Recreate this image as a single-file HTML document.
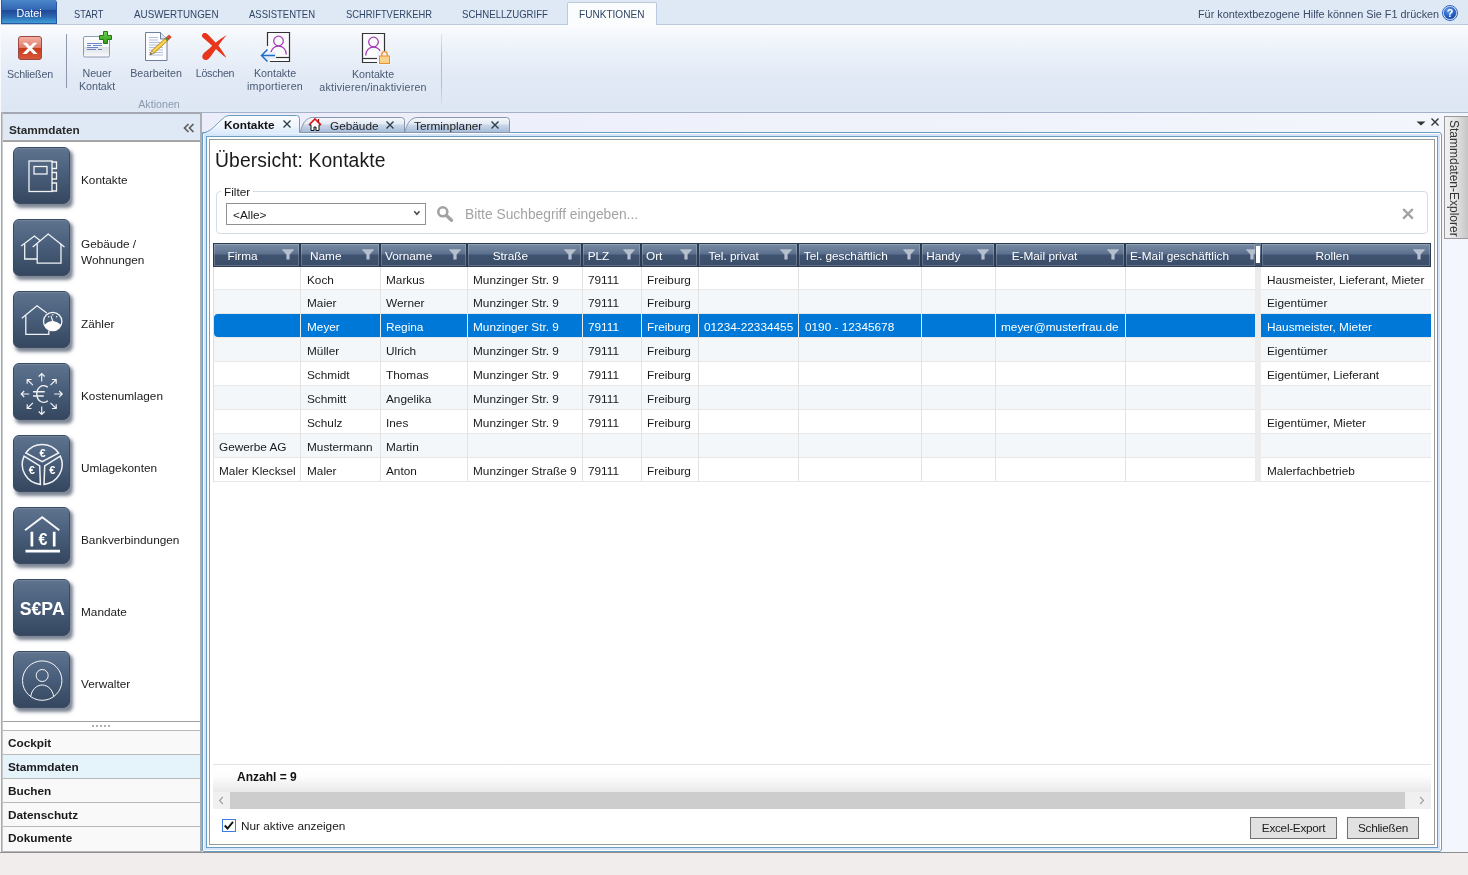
<!DOCTYPE html>
<html lang="de">
<head>
<meta charset="utf-8">
<title>Übersicht: Kontakte</title>
<style>
*{box-sizing:border-box;margin:0;padding:0}
html,body{width:1468px;height:875px;overflow:hidden}
body{will-change:transform;position:relative;background:#f3f6fc;font-family:"Liberation Sans",sans-serif;font-size:11.8px;color:#1a1a1a}
.abs{position:absolute}
.t{position:absolute;white-space:nowrap;line-height:1}
/* ribbon tab strip */
#rtabs{position:absolute;left:0;top:0;width:1468px;height:25px;background:#dfe9f5;border-bottom:1px solid #b9c9de}
#rtabs .rt{position:absolute;top:9px;font-size:10.6px;color:#2f4566;white-space:nowrap;line-height:1;transform-origin:left center;transform:scaleX(.92)}
#datei{position:absolute;left:1px;top:0;width:56px;height:24px;border:1px solid #2a57a5;border-top:none;border-radius:0 3px 0 0;
 background:linear-gradient(#4a86c8 0,#3366b4 42%,#1f4797 46%,#2a64b0 70%,#3fa0d6 100%);color:#fff;font-size:10.800px;text-align:center;line-height:26px}
#funk{position:absolute;left:567px;top:2px;width:90px;height:24px;background:#fbfcfe;border:1px solid #b9c9de;border-bottom:none;border-radius:2px 2px 0 0}
/* ribbon body */
#ribbon{position:absolute;left:0;top:25px;width:1468px;height:86px;background:linear-gradient(#fafcfe 0,#eef3fa 25%,#e2eaf6 60%,#dde6f3 100%);border-bottom:1px solid #d3deed}
#ribbon .lb{position:absolute;font-size:10.7px;color:#4a5a74;white-space:nowrap;text-align:center;line-height:13px}
#belowrib{position:absolute;left:0;top:110px;width:1468px;height:3px;background:linear-gradient(#dfe8f4 0,#dfe8f4 50%,#a6b2ca 67%,#a6b2ca 100%)}
/* left panel */
#left{position:absolute;left:2px;top:112px;width:200px;height:740px;background:#fff;border:1px solid #a8a8a8;border-left-color:#c9c9c9;border-right:2px solid #adadb2;border-bottom:2px solid #b8b8b8;border-top:2px solid #a3a8b2}
#lhead{position:absolute;left:0;top:0;width:197px;height:27px;background:#dfe9f5;border-bottom:1px solid #a9a9a9}
#lbody{position:absolute;left:0;top:27px;width:197px;height:581px;background:#fff;border:1px solid #a0a0a0;border-left:none;border-right:none}
.ic{position:absolute;left:10px;width:57px;height:57px;border-radius:6px;background:linear-gradient(#5e738e 0,#4a5f7b 45%,#35475f 100%);box-shadow:2.500px 3.500px 3.500px rgba(45,58,82,.62),inset 0 1px 0 rgba(255,255,255,.12);border:1px solid #3a4b63}
.ic svg{position:absolute;left:0;top:0}
.il{position:absolute;left:78px;font-size:11.8px;color:#1a1a1a;line-height:16px;white-space:nowrap}
.nav{position:absolute;left:0;width:197px;height:24px;border-top:1px solid #b8b8b8;background:#f9f9f9;font-weight:bold;font-size:11.8px;line-height:24px;padding-left:5px;color:#1a1a1a}
/* status */
#status{position:absolute;left:0;top:852px;width:1468px;height:23px;background:#f0edec;border-top:1px solid #8e8e8e}
/* doc tabs */
.dtab{position:absolute;top:116px;height:18px}
/* frame */
#f1{position:absolute;left:202px;top:132px;width:1240px;height:720px;border:1px solid #6b9dc2;background:#d5e6fb;box-shadow:inset 0 0 0 1px #fff;border-radius:0 3px 3px 2px}
#f2{position:absolute;left:206px;top:136px;width:1232px;height:712px;border:1px solid #6b9dc2;background:#fff}
#f3{position:absolute;left:209px;top:139px;width:1226px;height:706px;border:1px solid #999;background:#fff}
/* grid */
.hc{position:absolute;top:243px;height:24px;background:linear-gradient(#788aa2 0,#6a7d98 25%,#5a6f8d 46%,#3f5371 50%,#3a4d68 100%);border:1px solid #2b3b52;box-shadow:inset 0 0 0 1px rgba(255,255,255,.2);color:#fff;font-size:11.8px;line-height:22px;white-space:nowrap;overflow:hidden}
.hc span{position:absolute;top:1px}
.hc svg{position:absolute;top:4.800px;right:5.300px}
.row{position:absolute;left:214px;width:1217px;height:24px}
.row.alt{background:#f3f7f9}
.row.sel{background:#0078d7;color:#fff;border-radius:4px 0 0 4px}
.row span{position:absolute;top:8px;white-space:nowrap;line-height:1;font-size:11.8px}
.vl{position:absolute;top:267px;width:1px;height:215px;background:#e3e3e3}
.hl{position:absolute;left:213px;width:1218px;height:1px;background:#e8e8e8}
.btn{position:absolute;top:817px;height:22px;border:1px solid #707070;background:#e1e1e1;font-size:11.8px;line-height:20px;text-align:center;color:#1a1a1a}
</style>
</head>
<body>
<div id="rtabs">
 <div id="datei">Datei</div>
 <div id="funk"></div>
 <span class="rt" style="left:74px;transform:scaleX(0.873)">START</span>
 <span class="rt" style="left:134px;transform:scaleX(0.928)">AUSWERTUNGEN</span>
 <span class="rt" style="left:249px;transform:scaleX(0.897)">ASSISTENTEN</span>
 <span class="rt" style="left:346px;transform:scaleX(0.885)">SCHRIFTVERKEHR</span>
 <span class="rt" style="left:462px;transform:scaleX(0.907)">SCHNELLZUGRIFF</span>
 <span class="rt" style="left:579px;transform:scaleX(0.95)">FUNKTIONEN</span>
 <span class="t" style="left:1198px;top:9px;font-size:10.85px;color:#3a4a66">Für kontextbezogene Hilfe können Sie F1 drücken</span>
<svg class="abs" style="left:1441px;top:4px" width="18" height="18" viewBox="0 0 18 18"><defs><radialGradient id="hg" cx=".4" cy=".3" r=".85"><stop offset="0" stop-color="#6aa6ec"/><stop offset=".5" stop-color="#2c68c8"/><stop offset="1" stop-color="#0a2f8a"/></radialGradient></defs><circle cx="9" cy="9" r="7.500" fill="#eaf1fc" stroke="#2d64c4" stroke-width="1"/><circle cx="9" cy="9" r="6" fill="url(#hg)" stroke="#2a5fc0" stroke-width=".6"/><text x="9" y="12.900" font-family="Liberation Sans, sans-serif" font-weight="bold" font-size="10.800" fill="#fff" text-anchor="middle">?</text></svg>
</div>
<div id="ribbon">
 <!-- Schliessen -->
 <svg class="abs" style="left:16px;top:9px" width="28" height="30" viewBox="0 0 28 30">
  <defs><linearGradient id="rg" x1="0" y1="0" x2="0" y2="1"><stop offset="0" stop-color="#f4b3a6"/><stop offset=".48" stop-color="#e07a68"/><stop offset=".52" stop-color="#c93a1c"/><stop offset="1" stop-color="#d9583a"/></linearGradient></defs>
  <rect x="2.5" y="2.5" width="23" height="23" rx="2.5" fill="url(#rg)" stroke="#9a4a3e" stroke-width="1"/>
  <path d="M6.600 8.700H10.700L14 12.200L17.300 8.700H21.400L16.100 14.300L21.600 20.100H17.400L14 16.500L10.600 20.100H6.400L11.900 14.300Z" fill="#fff"/>
 </svg>
 <span class="lb" style="left:7px;top:43px;width:46px;letter-spacing:-.18px">Schließen</span>
 <div class="abs" style="left:66px;top:9px;width:1px;height:54px;background:#8d98ab"></div>
 <!-- Neuer Kontakt -->
 <svg class="abs" style="left:80px;top:4px" width="36" height="34" viewBox="0 0 36 34">
  <defs><linearGradient id="cg" x1="0" y1="0" x2="0" y2="1"><stop offset="0" stop-color="#fdfdfe"/><stop offset=".5" stop-color="#f6f7fa"/><stop offset=".52" stop-color="#dfe0e5"/><stop offset=".8" stop-color="#eceef2"/><stop offset="1" stop-color="#fafbfd"/></linearGradient>
  <linearGradient id="gg" x1="0" y1="0" x2="0" y2="1"><stop offset="0" stop-color="#6fd04f"/><stop offset="1" stop-color="#2f9a1c"/></linearGradient></defs>
  <rect x="3.5" y="7.500" width="26" height="20.500" rx="1.500" fill="url(#cg)" stroke="#8e9bb3" stroke-width="1"/>
  <path d="M7 14.500h15M7 16.500h4M13 16.500h9M7 18.500h11M7 20.500h9M18 20.500h4" stroke="#5a78c0" stroke-width=".9" fill="none"/>
  <path d="M23.500 2.500h4v4h4v4h-4v4h-4v-4h-4v-4h4z" fill="url(#gg)" stroke="#1f7a12" stroke-width="1"/>
 </svg>
 <span class="lb" style="left:74px;top:42px;width:46px">Neuer<br>Kontakt</span>
 <!-- Bearbeiten -->
 <svg class="abs" style="left:143px;top:5px" width="32" height="34" viewBox="0 0 32 34">
  <path d="M2.5 2.5h15l6.5 6.5v21.5h-21.5z" fill="#fbfcfe" stroke="#6f7f9c" stroke-width="1"/>
  <path d="M17.5 2.5v6.5h6.500" fill="#dfe6f2" stroke="#6f7f9c" stroke-width="1"/>
  <path d="M6 7.500h9M6 10h9M6 12.500h14M6 15h14M6 17.500h14M6 20h14M6 22.500h14M6 25h14" stroke="#a9b7d6" stroke-width=".9"/>
  <path d="M7 24.600L8.800 20.600L22.100 8.500L24.400 11L11.100 23.150Z" fill="#f5c533" stroke="#a87f14" stroke-width=".7" stroke-linejoin="round"/>
  <path d="M9.900 21.800L23.200 9.700" stroke="#fbe38a" stroke-width=".9"/>
  <path d="M7 24.600L8.800 20.600L11.100 23.150Z" fill="#f2d6ad" stroke="#8a7350" stroke-width=".5"/>
  <path d="M7 24.600L7.800 22.900L9 24.100Z" fill="#2a2a2a"/>
  <path d="M22.100 8.500L23.350 7.320L25.650 9.840L24.400 11Z" fill="#3f9a58" stroke="#2c6e3e" stroke-width=".4"/>
  <path d="M23.350 7.320L25 5.700C25.600 5.100 26.500 5.100 27.100 5.700L27.600 6.200C28.200 6.900 28.200 7.600 27.500 8.200L25.650 9.840Z" fill="#e4472c" stroke="#a8301c" stroke-width=".4"/>
 </svg>
 <span class="lb" style="left:126px;top:42px;width:60px">Bearbeiten</span>
 <!-- Loeschen -->
 <svg class="abs" style="left:199px;top:5px" width="32" height="34" viewBox="0 0 32 34">
  <path d="M3.200 6.800C2.200 4.600 4.200 2.400 6.600 3C8.200 3.500 9.200 4.600 10.200 5.800L18.400 14.600C21.600 18.500 25 23.500 27.500 27.900C23.500 25.200 19 20.800 15.500 17.700L5.200 8.800C4.300 8.200 3.600 7.600 3.200 6.800Z" fill="#e8361c"/>
  <path d="M27.900 5C24.500 8.600 21.200 13 18.800 16.400C15.600 20.700 12.600 25.600 9.700 28.700C7.800 30.700 4.600 30.500 3.500 28.100C2.700 26 3.900 24 5.500 22.600C8.500 20 11.500 17.300 14.600 14.400C18.500 10.900 23.500 7.400 27.900 5Z" fill="#e8361c"/>
 </svg>
 <span class="lb" style="left:190px;top:42px;width:50px;letter-spacing:-.28px">Löschen</span>
 <!-- Kontakte importieren -->
 <svg class="abs" style="left:258px;top:4px" width="36" height="36" viewBox="0 0 36 36">
  <path d="M12 3.500h19.500v29h-17" fill="#fdfdfe" stroke="none"/>
  <path d="M9.500 17V3.500h22v29H12" fill="#fbfbfd" stroke="#333" stroke-width="1.200"/>
  <path d="M31.500 28.500H14" stroke="#333" stroke-width="1.200" fill="none"/>
  <circle cx="20.500" cy="12" r="4.800" fill="none" stroke="#a43fb5" stroke-width="1.300"/>
  <path d="M12.700 25.500c0-5 3.500-8.500 7.800-8.500s7.800 3.500 7.800 8.500" fill="none" stroke="#a43fb5" stroke-width="1.300"/>
  <rect x="9" y="23" width="9" height="7" fill="#e8eef8"/>
  <path d="M3.500 26.500H17M9.500 20.500l-6 6 6 6" fill="none" stroke="#1e6fc8" stroke-width="1.500"/>
 </svg>
 <span class="lb" style="left:240px;top:42px;width:70px">Kontakte<br><span style="letter-spacing:.23px">importieren</span></span>
 <!-- Kontakte aktivieren -->
 <svg class="abs" style="left:358px;top:4px" width="36" height="38" viewBox="0 0 36 38">
  <path d="M4.500 4.500h22v29h-22z" fill="#fbfbfd" stroke="#333" stroke-width="1.200"/>
  <path d="M4.500 29.500h22" stroke="#333" stroke-width="1.200"/>
  <circle cx="15.500" cy="13" r="4.800" fill="none" stroke="#a43fb5" stroke-width="1.300"/>
  <path d="M7.700 26.500c0-5 3.500-8.500 7.800-8.500s7.800 3.500 7.800 8.500" fill="none" stroke="#a43fb5" stroke-width="1.300"/>
  <rect x="19" y="22" width="14" height="14" fill="#eef2fa"/>
  <path d="M23.800 27v-1.600a2.700 2.700 0 0 1 5.400 0V27" fill="none" stroke="#f0902c" stroke-width="1.300"/>
  <rect x="21.500" y="27" width="10" height="7.500" fill="#f9d38a" stroke="#f0902c" stroke-width="1"/>
 </svg>
 <span class="lb" style="left:313px;top:43px;width:120px">Kontakte<br><span style="letter-spacing:.2px">aktivieren/inaktivieren</span></span>
 <span class="lb" style="left:129px;top:73px;width:60px;color:#8c99af">Aktionen</span>
 <div class="abs" style="left:441px;top:9px;width:1px;height:74px;background:linear-gradient(#dfe6f0,#b4c0d2 30%,#b4c0d2 70%,#dfe6f0)"></div>
</div>
<div id="belowrib"></div>
<div id="left">
 <div id="lhead"><span class="t" style="left:6px;top:11px;font-weight:bold;font-size:11.800px;color:#2a2a2a">Stammdaten</span>
  <svg class="abs" style="left:180px;top:9px" width="12" height="10" viewBox="0 0 12 10"><path d="M5.500 1L1.500 5l4 4M10.500 1L6.500 5l4 4" fill="none" stroke="#5e5e5e" stroke-width="1.700"/></svg></div>
 <div id="lbody">
<div class="ic" style="top:5px"><svg width="57" height="57" viewBox="0 0 57 57"><g stroke="#fff" stroke-width="1.3" fill="none" stroke-linejoin="miter" stroke-opacity=".92"><rect x="15" y="13" width="23" height="30.500"/><rect x="20" y="18.500" width="13" height="7.500"/><path d="M38 14h4.500v6.500h-4.500M38 24.500h4.500v6.500h-4.500M38 35h4.500v8h-4.500"/></g></svg></div>
<div class="il" style="top:30px">Kontakte</div>
<div class="ic" style="top:77px"><svg width="57" height="57" viewBox="0 0 57 57"><g stroke="#fff" stroke-width="1.3" fill="none" stroke-linejoin="miter" stroke-opacity=".92"><path d="M7.200 26L20.400 16L26 20.500"/><path d="M10.700 24V39H23"/><path d="M18.700 27L34.200 14L50.500 27"/><path d="M23.200 23.700V43.200H47V23.700"/></g></svg></div>
<div class="il" style="top:94px">Gebäude /<br>Wohnungen</div>
<div class="ic" style="top:149px"><svg width="57" height="57" viewBox="0 0 57 57"><g stroke="#fff" stroke-width="1.3" fill="none" stroke-linejoin="miter" stroke-opacity=".92"><path d="M7.800 26.300L23 13.800L32.800 21"/><path d="M11.800 23.500V42.300H34.800V38.800"/><circle cx="38.700" cy="29.500" r="9.200"/></g><path d="M30.400 32.800Q34 29.300 38 29L36.500 23.800L37.300 23.600L39.300 29Q43.500 29.400 47 32.800A8.700 8.700 0 0 1 30.400 32.800Z" fill="#fff"/><circle cx="34.700" cy="24.800" r=".7" fill="#fff"/><circle cx="38.700" cy="22.800" r=".7" fill="#fff"/><circle cx="42.700" cy="24.800" r=".7" fill="#fff"/></svg></div>
<div class="il" style="top:174px">Zähler</div>
<div class="ic" style="top:221px"><svg width="57" height="57" viewBox="0 0 57 57"><g stroke="#fff" stroke-width="1.150" fill="none" stroke-opacity=".92"><path d="M40.2 30.0L48.2 30.0M45.2 33.0L48.2 30.0L45.2 27.0M36.5 38.8L42.2 44.5M37.9 44.5L42.2 44.5L42.2 40.2M27.7 42.5L27.7 50.5M24.7 47.5L27.7 50.5L30.7 47.5M18.9 38.8L13.2 44.5M13.2 40.2L13.2 44.5L17.5 44.5M15.2 30.0L7.2 30.0M10.2 27.0L7.2 30.0L10.2 33.0M18.9 21.2L13.2 15.5M17.5 15.5L13.2 15.5L13.2 19.8M27.7 17.5L27.7 9.5M30.7 12.5L27.7 9.5L24.7 12.5M36.5 21.2L42.2 15.5M42.2 19.8L42.2 15.5L37.9 15.5"/><path d="M33.800 23.200C31.800 21.500 28.300 21 25.800 23C21.800 26 21.800 34 25.800 37C28.300 39 31.800 38.500 33.800 36.800M19 27.800H30.800M19 32H29.800" stroke-width="1.400"/></g></svg></div>
<div class="il" style="top:246px">Kostenumlagen</div>
<div class="ic" style="top:293px"><svg width="57" height="57" viewBox="0 0 57 57"><path d="M28.2 25.6L11.8 17.0A20 20 0 0 1 44.6 17.0ZM30.7 29.9L46.3 20.1A20 20 0 0 1 30.0 48.4ZM25.7 29.9L26.4 48.4A20 20 0 0 1 10.1 20.1Z" stroke="#fff" stroke-width="1.500" fill="none" stroke-opacity=".92"/><text x="28.600" y="21" font-size="11" font-family="Liberation Sans, sans-serif" font-weight="bold" fill="#fff" text-anchor="middle">€</text><text x="17.900" y="38.300" font-size="11" font-family="Liberation Sans, sans-serif" font-weight="bold" fill="#fff" text-anchor="middle">€</text><text x="38.300" y="38.300" font-size="11" font-family="Liberation Sans, sans-serif" font-weight="bold" fill="#fff" text-anchor="middle">€</text></svg></div>
<div class="il" style="top:318px">Umlagekonten</div>
<div class="ic" style="top:365px"><svg width="57" height="57" viewBox="0 0 57 57"><path d="M11 22.300L28.200 9.300L45.300 22.300" stroke="#fff" stroke-width="1.900" fill="none" stroke-opacity=".95"/><path d="M17.900 23.800V38.500M40.200 23.800V38.500M11.500 43.200H46" stroke="#fff" stroke-width="2.700" fill="none"/><text x="29" y="36.800" font-size="16" font-family="Liberation Sans, sans-serif" font-weight="bold" fill="#fff" text-anchor="middle">€</text></svg></div>
<div class="il" style="top:390px">Bankverbindungen</div>
<div class="ic" style="top:437px"><svg width="57" height="57" viewBox="0 0 57 57"><text x="28.200" y="35.200" font-size="17.500" font-family="Liberation Sans, sans-serif" font-weight="bold" fill="#fff" text-anchor="middle" textLength="45" lengthAdjust="spacingAndGlyphs">S€PA</text></svg></div>
<div class="il" style="top:462px">Mandate</div>
<div class="ic" style="top:509px"><svg width="57" height="57" viewBox="0 0 57 57"><g stroke="#fff" stroke-width="1" fill="none" stroke-opacity=".95"><circle cx="28.200" cy="28.600" r="19.700"/><circle cx="28.200" cy="23.500" r="6"/><path d="M16.800 44.500C17.500 38 22.500 33 28.200 33C33.900 33 38.900 38 39.600 44.500"/></g></svg></div>
<div class="il" style="top:534px">Verwalter</div>
 </div>
 <div class="abs" style="left:89px;top:611px;width:18px;height:2px;background:repeating-linear-gradient(90deg,#b0b0b0 0 2px,transparent 2px 4px)"></div>
<div class="nav" style="top:616px">Cockpit</div>
<div class="nav" style="top:640px;background:#e5f3fb">Stammdaten</div>
<div class="nav" style="top:664px">Buchen</div>
<div class="nav" style="top:688px">Datenschutz</div>
<div class="nav" style="top:712px;line-height:22px;height:25px">Dokumente</div>
</div>
<div id="status"></div>
<div class="abs" style="left:1px;top:112px;width:1px;height:740px;background:#a9a9a9"></div>
<div class="abs" style="left:0;top:0;width:1px;height:852px;background:#f8fafd"></div>
<div class="abs" style="left:202px;top:113px;width:1240px;height:20px;background:linear-gradient(90deg,#ecedfa 0,#eff1fb 50%,#f3f6fc 100%)"></div>
<svg class="abs" style="left:203px;top:113px;z-index:3;overflow:visible" width="320" height="22" viewBox="0 0 320 22">
 <defs>
  <linearGradient id="tg" x1="0" y1="0" x2="0" y2="1"><stop offset="0" stop-color="#f7f9fc"/><stop offset=".42" stop-color="#e3eaf4"/><stop offset=".5" stop-color="#cad7e9"/><stop offset="1" stop-color="#a4bbd9"/></linearGradient>
  <linearGradient id="ta" x1="0" y1="0" x2="0" y2="1"><stop offset="0" stop-color="#fcfdff"/><stop offset=".5" stop-color="#eef5fd"/><stop offset="1" stop-color="#d5e6fb"/></linearGradient>
 </defs>
 <path d="M201.500 19.500C203.500 14 204.500 8.500 210 5.500C212 4.600 214 4.500 216 4.500H303.500Q306.500 4.500 306.500 7.500V19.500Z" fill="url(#tg)" stroke="#8796ad" stroke-width="1"/>
 <path d="M97 19.500C99 14 100 8.500 105.500 5.500C107 4.600 109 4.500 111 4.500H198.500Q201.500 4.500 201.500 7.500V19.500Z" fill="url(#tg)" stroke="#8796ad" stroke-width="1"/>
 <path d="M0.500 23V21Q0.500 20.300 2 20C10 17 14 10 20 5.500C22 3.600 24 2.500 27 2.500H93.500Q96.500 2.500 96.500 5.500V20.500L0.500 21Z" fill="url(#ta)"/>
 <path d="M-0.500 23V21.500Q-0.500 19.700 2 19.500C10 17 14 10 20 5.500C22 3.600 24 2.500 27 2.500H93.500Q96.500 2.500 96.500 5.500V19.500" fill="none" stroke="#6b9dc2" stroke-width="1"/>
 <g stroke="#2a3f4a" stroke-width="1.400" fill="none"><path d="M80.500 7.500l7 7M87.500 7.500l-7 7"/><path d="M183.500 8.500l7 7M190.500 8.500l-7 7"/><path d="M288.500 8.500l7 7M295.500 8.500l-7 7"/></g>
 <g><path d="M112 6l-5.800 5.800h1.800v5.700h3v-3.500h2v3.500h3v-5.700h1.800z" fill="#fff" stroke="#111" stroke-width="1"/><path d="M106 12L112 6l6 6" fill="none" stroke="#e01010" stroke-width="1.600"/><path d="M115.500 6v3" stroke="#a01010" stroke-width="1.200"/></g>
</svg>
<span class="t" style="z-index:4;left:224px;top:119.500px;font-weight:bold;font-size:11.800px;color:#111">Kontakte</span>
<span class="t" style="z-index:4;left:330px;top:120.500px;font-size:11.800px;color:#222">Gebäude</span>
<span class="t" style="z-index:4;left:414px;top:120.500px;font-size:11.800px;color:#222">Terminplaner</span>
<svg class="abs" style="left:1415px;top:117px" width="28" height="12" viewBox="0 0 28 12"><path d="M1.500 4.500h9l-4.500 4z" fill="#333"/><path d="M16.500 1.500l7 7M23.500 1.500l-7 7" stroke="#333" stroke-width="1.400" fill="none"/></svg>
<div class="abs" style="left:1444px;top:116px;width:25px;height:123px;border:1px solid #9a9a9a;background:linear-gradient(90deg,#f2f2f2 0,#e4e4e4 45%,#c6c6c6 100%)"></div>
<span class="t" style="left:1460px;top:119.500px;font-size:12px;color:#333;transform:rotate(90deg);transform-origin:left top">Stammdaten-Explorer</span>
<div id="f1"></div><div id="f2"></div><div id="f3"></div>
<span class="t" style="left:215px;top:151px;font-size:19.300px;color:#1a1a1a;letter-spacing:.12px">Übersicht: Kontakte</span>
<div class="abs" style="left:216px;top:191px;width:1212px;height:43px;border:1px solid #d3dde5;border-radius:4px"></div>
<span class="t" style="left:221px;top:187px;font-size:11.800px;background:#fff;padding:0 3px">Filter</span>
<div class="abs" style="left:226px;top:203px;width:200px;height:22px;border:1px solid #919191;background:#fff"></div>
<span class="t" style="left:233px;top:210px;font-size:11.800px">&lt;Alle&gt;</span>
<svg class="abs" style="left:412.500px;top:210px" width="8" height="6" viewBox="0 0 8 6"><path d="M1.300 1.200l2.600 3.100 2.600-3.100" fill="none" stroke="#484848" stroke-width="1.500"/></svg>
<svg class="abs" style="left:436px;top:205px" width="18" height="18" viewBox="0 0 18 18"><circle cx="6.800" cy="6.800" r="4.500" fill="none" stroke="#a2a2a2" stroke-width="2.600"/><path d="M10.500 10.500L15.500 15.300" stroke="#a2a2a2" stroke-width="3.300" stroke-linecap="round"/></svg>
<span class="t" style="left:465px;top:208px;font-size:13.800px;color:#a3a3a3">Bitte Suchbegriff eingeben...</span>
<svg class="abs" style="left:1400px;top:206px" width="16" height="16" viewBox="0 0 16 16"><path d="M3.200 3l9.600 9.600M12.800 3L3.200 12.600" stroke="#a2a2a2" stroke-width="2.400" fill="none"/></svg>
<div class="abs" style="left:213px;top:243px;width:1218px;height:24px;background:#2c3b50"></div>
<div class="hc" style="left:213px;width:87px"><span style="left:13.5px">Firma</span><svg width="12" height="11" viewBox="0 0 12 11"><path d="M.2.300h11.600v.700L7.600 5.600V10.600H4.400V5.600L.2 1z" fill="#b6bfcd"/></svg></div>
<div class="hc" style="left:300px;width:80px"><span style="left:9.0px">Name</span><svg width="12" height="11" viewBox="0 0 12 11"><path d="M.2.300h11.600v.700L7.600 5.600V10.600H4.400V5.600L.2 1z" fill="#b6bfcd"/></svg></div>
<div class="hc" style="left:380px;width:87px"><span style="left:4.0px">Vorname</span><svg width="12" height="11" viewBox="0 0 12 11"><path d="M.2.300h11.600v.700L7.600 5.600V10.600H4.400V5.600L.2 1z" fill="#b6bfcd"/></svg></div>
<div class="hc" style="left:467px;width:115px"><span style="left:24.7px">Straße</span><svg width="12" height="11" viewBox="0 0 12 11"><path d="M.2.300h11.600v.700L7.600 5.600V10.600H4.400V5.600L.2 1z" fill="#b6bfcd"/></svg></div>
<div class="hc" style="left:582px;width:59px"><span style="left:4.7px">PLZ</span><svg width="12" height="11" viewBox="0 0 12 11"><path d="M.2.300h11.600v.700L7.600 5.600V10.600H4.400V5.600L.2 1z" fill="#b6bfcd"/></svg></div>
<div class="hc" style="left:641px;width:57px"><span style="left:4.0px">Ort</span><svg width="12" height="11" viewBox="0 0 12 11"><path d="M.2.300h11.600v.700L7.600 5.600V10.600H4.400V5.600L.2 1z" fill="#b6bfcd"/></svg></div>
<div class="hc" style="left:698px;width:100px"><span style="left:9.4px">Tel. privat</span><svg width="12" height="11" viewBox="0 0 12 11"><path d="M.2.300h11.600v.700L7.600 5.600V10.600H4.400V5.600L.2 1z" fill="#b6bfcd"/></svg></div>
<div class="hc" style="left:798px;width:123px"><span style="left:4.8px">Tel. geschäftlich</span><svg width="12" height="11" viewBox="0 0 12 11"><path d="M.2.300h11.600v.700L7.600 5.600V10.600H4.400V5.600L.2 1z" fill="#b6bfcd"/></svg></div>
<div class="hc" style="left:921px;width:74px"><span style="left:4.2px">Handy</span><svg width="12" height="11" viewBox="0 0 12 11"><path d="M.2.300h11.600v.700L7.600 5.600V10.600H4.400V5.600L.2 1z" fill="#b6bfcd"/></svg></div>
<div class="hc" style="left:995px;width:130px"><span style="left:15.7px">E-Mail privat</span><svg width="12" height="11" viewBox="0 0 12 11"><path d="M.2.300h11.600v.700L7.600 5.600V10.600H4.400V5.600L.2 1z" fill="#b6bfcd"/></svg></div>
<div class="hc" style="left:1125px;width:130px;border-right:none"><span style="left:4.0px">E-Mail geschäftlich</span><svg style="right:-2.800px" width="12" height="11" viewBox="0 0 12 11"><path d="M.2.300h11.600v.700L7.600 5.600V10.600H4.400V5.600L.2 1z" fill="#b6bfcd"/></svg></div>
<div class="hc" style="left:1261px;width:170px"><span style="left:53.5px">Rollen</span><svg width="12" height="11" viewBox="0 0 12 11"><path d="M.2.300h11.600v.700L7.600 5.600V10.600H4.400V5.600L.2 1z" fill="#b6bfcd"/></svg></div>
<div class="abs" style="left:1255px;top:267px;width:6px;height:215px;background:#ebebeb"></div>
<div class="abs" style="left:1255px;top:243px;width:6px;height:24px;background:linear-gradient(#788aa2 0,#5a6f8d 46%,#3f5371 50%,#3a4d68 100%);border-top:1px solid #55677f;border-bottom:1px solid #2b3b52"></div>
<div class="abs" style="left:213px;top:267px;width:1px;height:215px;background:#dedede"></div>
<div class="abs" style="left:1256px;top:246px;width:4px;height:17px;background:linear-gradient(90deg,#fff 0,#fff 40%,#e4e8ee 50%,#fff 60%,#fff 100%)"></div>
<div class="row" style="top:267px;height:22px"><span style="left:93px">Koch</span><span style="left:172px">Markus</span><span style="left:259px">Munzinger Str. 9</span><span style="left:374px">79111</span><span style="left:433px">Freiburg</span><span style="left:1053px">Hausmeister, Lieferant, Mieter</span></div>
<div class="row alt" style="top:290px;height:23px"><span style="left:93px">Maier</span><span style="left:172px">Werner</span><span style="left:259px">Munzinger Str. 9</span><span style="left:374px">79111</span><span style="left:433px">Freiburg</span><span style="left:1053px">Eigentümer</span></div>
<div class="row sel" style="top:314px;height:23px"><span style="left:93px">Meyer</span><span style="left:172px">Regina</span><span style="left:259px">Munzinger Str. 9</span><span style="left:374px">79111</span><span style="left:433px">Freiburg</span><span style="left:490px">01234-22334455</span><span style="left:591px">0190 - 12345678</span><span style="left:787px">meyer@musterfrau.de</span><span style="left:1053px">Hausmeister, Mieter</span></div>
<div class="row alt" style="top:338px;height:23px"><span style="left:93px">Müller</span><span style="left:172px">Ulrich</span><span style="left:259px">Munzinger Str. 9</span><span style="left:374px">79111</span><span style="left:433px">Freiburg</span><span style="left:1053px">Eigentümer</span></div>
<div class="row" style="top:362px;height:23px"><span style="left:93px">Schmidt</span><span style="left:172px">Thomas</span><span style="left:259px">Munzinger Str. 9</span><span style="left:374px">79111</span><span style="left:433px">Freiburg</span><span style="left:1053px">Eigentümer, Lieferant</span></div>
<div class="row alt" style="top:386px;height:23px"><span style="left:93px">Schmitt</span><span style="left:172px">Angelika</span><span style="left:259px">Munzinger Str. 9</span><span style="left:374px">79111</span><span style="left:433px">Freiburg</span></div>
<div class="row" style="top:410px;height:23px"><span style="left:93px">Schulz</span><span style="left:172px">Ines</span><span style="left:259px">Munzinger Str. 9</span><span style="left:374px">79111</span><span style="left:433px">Freiburg</span><span style="left:1053px">Eigentümer, Mieter</span></div>
<div class="row alt" style="top:434px;height:23px"><span style="left:5px">Gewerbe AG</span><span style="left:93px">Mustermann</span><span style="left:172px">Martin</span></div>
<div class="row" style="top:458px;height:23px"><span style="left:5px">Maler Klecksel</span><span style="left:93px">Maler</span><span style="left:172px">Anton</span><span style="left:259px">Munzinger Straße 9</span><span style="left:374px">79111</span><span style="left:433px">Freiburg</span><span style="left:1053px">Malerfachbetrieb</span></div>
<div class="hl" style="top:289px"></div><div class="hl" style="top:313px"></div><div class="hl" style="top:337px"></div><div class="hl" style="top:361px"></div><div class="hl" style="top:385px"></div><div class="hl" style="top:409px"></div><div class="hl" style="top:433px"></div><div class="hl" style="top:457px"></div><div class="hl" style="top:481px"></div><div class="vl" style="left:300px"></div><div class="vl" style="left:380px"></div><div class="vl" style="left:467px"></div><div class="vl" style="left:582px"></div><div class="vl" style="left:641px"></div><div class="vl" style="left:698px"></div><div class="vl" style="left:798px"></div><div class="vl" style="left:921px"></div><div class="vl" style="left:995px"></div><div class="vl" style="left:1125px"></div>
<div class="abs" style="left:300px;top:314px;width:1px;height:23px;background:rgba(255,255,255,.38)"></div><div class="abs" style="left:380px;top:314px;width:1px;height:23px;background:rgba(255,255,255,.38)"></div><div class="abs" style="left:467px;top:314px;width:1px;height:23px;background:rgba(255,255,255,.38)"></div><div class="abs" style="left:582px;top:314px;width:1px;height:23px;background:rgba(255,255,255,.38)"></div><div class="abs" style="left:641px;top:314px;width:1px;height:23px;background:rgba(255,255,255,.38)"></div><div class="abs" style="left:698px;top:314px;width:1px;height:23px;background:rgba(255,255,255,.38)"></div><div class="abs" style="left:798px;top:314px;width:1px;height:23px;background:rgba(255,255,255,.38)"></div><div class="abs" style="left:921px;top:314px;width:1px;height:23px;background:rgba(255,255,255,.38)"></div><div class="abs" style="left:995px;top:314px;width:1px;height:23px;background:rgba(255,255,255,.38)"></div><div class="abs" style="left:1125px;top:314px;width:1px;height:23px;background:rgba(255,255,255,.38)"></div>
<div class="abs" style="left:1255px;top:267px;width:6px;height:215px;background:#ececec"></div>
<div class="abs" style="left:213px;top:764px;width:1218px;height:28px;border-top:1px solid #e2e2e2;background:linear-gradient(#fff 0,#fdfdfd 40%,#e9e9e9 100%)"></div>
<span class="t" style="left:237px;top:771px;font-weight:bold;font-size:12px;color:#111">Anzahl = 9</span>
<div class="abs" style="left:213px;top:792px;width:1218px;height:17px;background:#f0f0f0"></div>
<div class="abs" style="left:230px;top:792px;width:1175px;height:17px;background:#cdcdcd"></div>
<svg class="abs" style="left:217px;top:795px" width="8" height="11" viewBox="0 0 8 11"><path d="M5.800 2L2.600 5.500 5.800 9" fill="none" stroke="#a0a0a0" stroke-width="1.200"/></svg>
<svg class="abs" style="left:1418px;top:795px" width="8" height="11" viewBox="0 0 8 11"><path d="M2.200 2l3.200 3.500L2.200 9" fill="none" stroke="#a0a0a0" stroke-width="1.200"/></svg>
<div class="abs" style="left:222px;top:819px;width:14px;height:13px;border:1px solid #3d7be0;background:#fff"></div>
<svg class="abs" style="left:223px;top:820px" width="12" height="11" viewBox="0 0 12 11"><path d="M1.800 5.500l2.700 3L10 1.800" fill="none" stroke="#111" stroke-width="1.900"/></svg>
<span class="t" style="left:241px;top:821px;font-size:11.800px">Nur aktive anzeigen</span>
<div class="btn" style="left:1250px;width:87px"><span style="letter-spacing:-.3px">Excel-Export</span></div>
<div class="btn" style="left:1347px;width:72px"><span style="letter-spacing:-.25px">Schließen</span></div>

</body>
</html>
